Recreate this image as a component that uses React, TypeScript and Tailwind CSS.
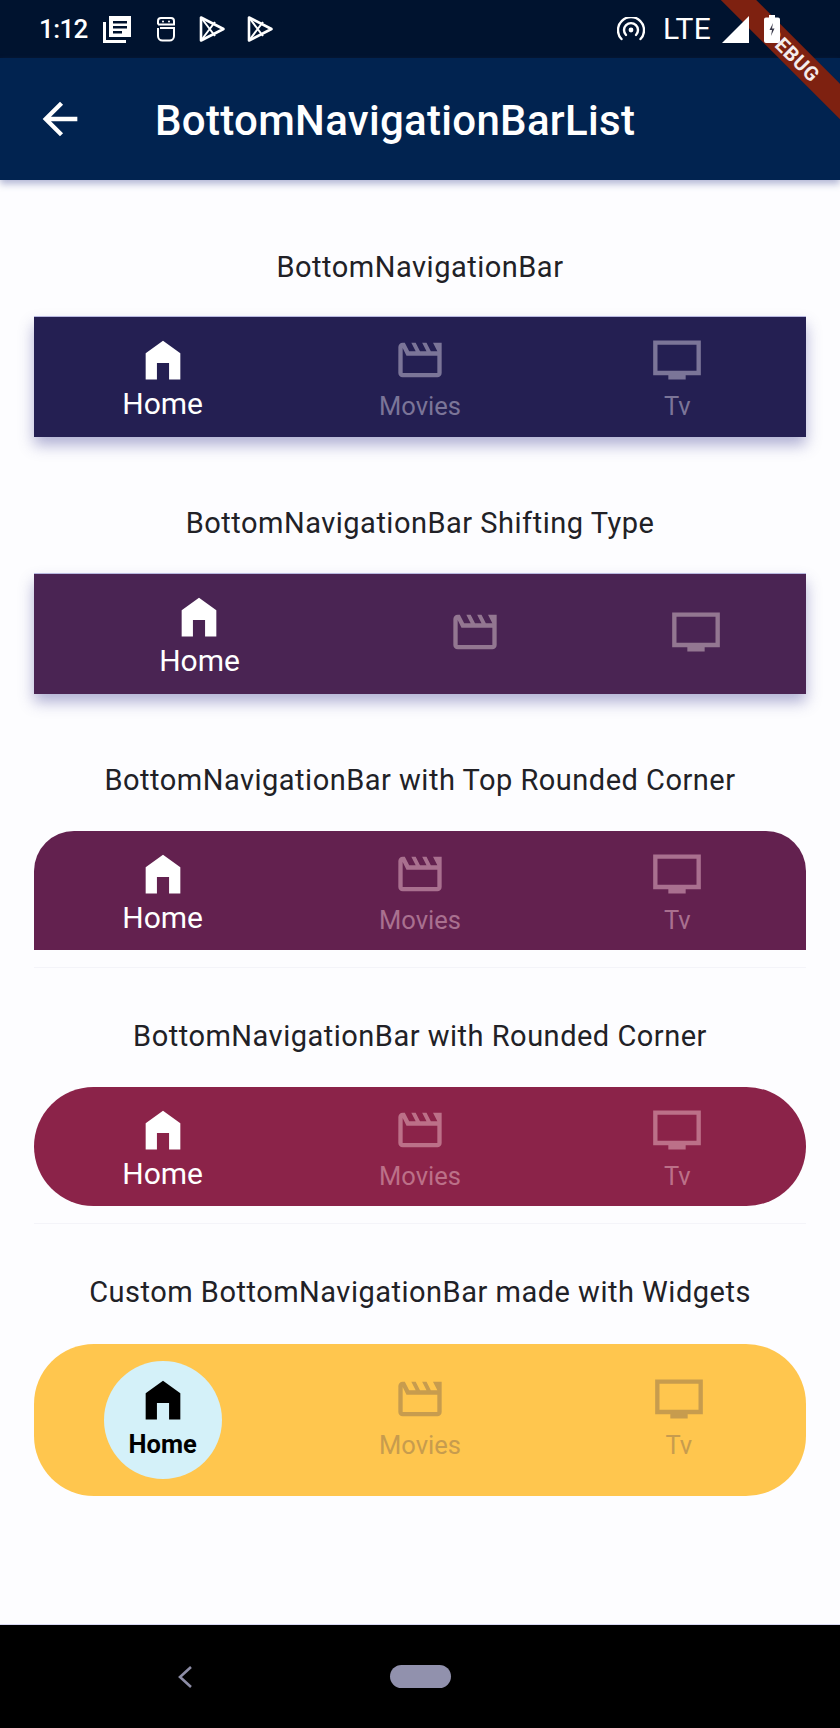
const HOME = 'M4 21V8.9L12 3.1l8 5.8V21h-5.2v-7.6H9.2V21z';
const MOVIE =
  'M4 6.47L5.76 10H20v8H4V6.47M22 4h-4l2 4h-3l-2-4h-2l2 4h-3l-2-4H8l2 4H7L5 4H4c-1.1 0-1.99.9-1.99 2L2 18c0 1.1.9 2 2 2h16c1.1 0 2-.9 2-2V4z';
const TV = 'M23 3H1v16h7v2h8v-2h7V3zm-2 14H3V5h18v12z';

function Icon({ d, className }: { d: string; className?: string }) {
  return (
    <svg viewBox="0 0 24 24" className={`h-[52px] w-[52px] shrink-0 fill-current ${className ?? ''}`}>
      <path d={d} />
    </svg>
  );
}

function Tab({ d, label, active, muted }: { d: string; label?: string; active?: boolean; muted: string }) {
  return (
    <div className={`flex flex-col items-center ${active ? 'text-white' : muted}`}>
      <Icon d={d} />
      {label && (
        <span className={active ? 'text-[30px] leading-[36px]' : 'text-[25.5px] leading-[40px]'}>{label}</span>
      )}
    </div>
  );
}

function Label({ children }: { children: string }) {
  return <p className="h-[37px] text-center text-[29px] leading-[37px] tracking-[0.5px] text-[#212126]">{children}</p>;
}

function PlayIcon() {
  return (
    <svg viewBox="0 0 28 28" className="h-7 w-7 fill-none stroke-white stroke-[2.6]" strokeLinejoin="round">
      <path d="M3 2.5v23L25.5 14z" />
      <path d="M3 2.5L17 21M3 25.5L17 7" strokeWidth="2" />
    </svg>
  );
}

function StatusBar() {
  return (
    <div className="flex h-[58px] items-center bg-[#00132f] pl-[39px] text-white">
      <span className="w-[64px] text-[26px] font-medium leading-none tracking-[-0.6px]">1:12</span>
      <svg viewBox="0 0 28 28" className="h-7 w-7 fill-white">
        <path d="M6 1h22v21H6zM0 7h3v18h20v3H0z" />
        <path d="M10 6h14v2.6H10zM10 11h14v2.6H10zM10 16h9v2.6h-9z" fill="#00132f" />
      </svg>
      <svg viewBox="0 0 22 26" className="ml-6 h-[26px] w-[22px] fill-none stroke-white stroke-2">
        <path d="M3 8.5V5a3 3 0 013-3h10a3 3 0 013 3v3.5H3M3 12v8a4.5 4.5 0 004.5 4.5h7a4.5 4.5 0 004.5-4.5v-8H5" />
        <circle cx="8" cy="5.6" r="1" fill="#fff" stroke="none" />
        <circle cx="14" cy="5.6" r="1" fill="#fff" stroke="none" />
      </svg>
      <div className="ml-[21px] flex gap-5">
        <PlayIcon />
        <PlayIcon />
      </div>
      <svg viewBox="0 0 28 24" className="ml-auto h-6 w-7 fill-none stroke-white stroke-[2.4]" strokeLinecap="round">
        <path d="M4.5 22A13 13 0 1123.5 22" />
        <path d="M9 18a7 7 0 1110 0" />
        <circle cx="14" cy="13" r="2.4" fill="#fff" stroke="none" />
      </svg>
      <span className="ml-[18px] w-[50px] text-[30px] leading-none tracking-[0.3px]">LTE</span>
      <svg viewBox="0 0 27 27" className="relative z-30 ml-[9px] h-[27px] w-[27px] fill-white">
        <path d="M27 0v27H0z" />
      </svg>
      <svg viewBox="0 0 16 28" className="relative z-30 ml-[15px] mr-[60px] h-7 w-4">
        <path d="M5 0h6v2.5h3a2 2 0 012 2V26a2 2 0 01-2 2H2a2 2 0 01-2-2V4.5a2 2 0 012-2h3z" fill="#fff" />
        <path d="M9 8l-3.5 7H8l-1 6 3.5-7.5H8z" fill="#3a3a4a" />
      </svg>
    </div>
  );
}

export default function App() {
  return (
    <div className="relative flex h-[1728px] w-[840px] flex-col overflow-hidden bg-[#fdfdff] font-[family-name:Roboto,sans-serif]">
      <StatusBar />
      <header className="relative z-10 flex h-[122px] items-center bg-[#012350] pl-[34px] text-white shadow-[0_4px_7px_rgba(70,80,150,0.4)]">
        <svg viewBox="0 0 24 24" className="h-[52px] w-[52px] fill-white">
          <path d="M20 11H7.83l5.59-5.59L12 4l-8 8 8 8 1.41-1.41L7.83 13H20v-2z" />
        </svg>
        <h1 className="ml-[69px] pt-[3px] text-[42px] font-medium tracking-[0.3px]">BottomNavigationBarList</h1>
      </header>

      <main className="flex-1 px-[34px] pt-[69px]">
        <Label>BottomNavigationBar</Label>
        <div className="mt-[31px] flex h-[120px] bg-[#241f52] pt-[17px] shadow-[0_-1px_0_#b8b8e0,0_8px_14px_rgba(70,70,150,0.42)]">
          <div className="flex flex-1 justify-center"><Tab d={HOME} label="Home" active muted="" /></div>
          <div className="flex flex-1 justify-center"><Tab d={MOVIE} label="Movies" muted="text-[#7b7598]" /></div>
          <div className="flex flex-1 justify-center"><Tab d={TV} label="Tv" muted="text-[#7b7598]" /></div>
        </div>

        <div className="mt-[68px]"><Label>BottomNavigationBar Shifting Type</Label></div>
        <div className="mt-[32px] flex h-[120px] bg-[#4a2453] shadow-[0_-1px_0_#b8b8e0,0_8px_14px_rgba(70,70,150,0.42)]">
          <div className="flex w-[331px] justify-center pt-[17px]"><Tab d={HOME} label="Home" active muted="" /></div>
          <div className="flex flex-1 items-center justify-center pb-[4px]"><Tab d={MOVIE} muted="text-[#937791]" /></div>
          <div className="flex flex-1 items-center justify-center pb-[4px]"><Tab d={TV} muted="text-[#937791]" /></div>
        </div>

        <div className="mt-[68px]"><Label>BottomNavigationBar with Top Rounded Corner</Label></div>
        <div className="mt-[32px] flex h-[119px] rounded-t-[40px] bg-[#63214f] pt-[17px]">
          <div className="flex flex-1 justify-center"><Tab d={HOME} label="Home" active muted="" /></div>
          <div className="flex flex-1 justify-center"><Tab d={MOVIE} label="Movies" muted="text-[#a9708f]" /></div>
          <div className="flex flex-1 justify-center"><Tab d={TV} label="Tv" muted="text-[#a9708f]" /></div>
        </div>
        <div className="mt-[17px] h-px bg-[#f4f4f9]" />

        <div className="mt-[50px]"><Label>BottomNavigationBar with Rounded Corner</Label></div>
        <div className="mt-[32px] flex h-[119px] rounded-[60px] bg-[#8b2349] pt-[17px]">
          <div className="flex flex-1 justify-center"><Tab d={HOME} label="Home" active muted="" /></div>
          <div className="flex flex-1 justify-center"><Tab d={MOVIE} label="Movies" muted="text-[#bc7088]" /></div>
          <div className="flex flex-1 justify-center"><Tab d={TV} label="Tv" muted="text-[#bc7088]" /></div>
        </div>
        <div className="mt-[17px] h-px bg-[#f4f4f9]" />

        <div className="mt-[50px]"><Label>Custom BottomNavigationBar made with Widgets</Label></div>
        <div className="mt-[33px] flex h-[152px] items-start rounded-[60px] bg-[#ffc64e] pt-[29px]">
          <div className="flex flex-1 justify-center">
            <div className="-mt-[12px] flex h-[118px] w-[118px] flex-col items-center rounded-full bg-[#d4f1f9] pt-[13px] text-black">
              <Icon d={HOME} />
              <span className="text-[25.5px] font-bold leading-[36px]">Home</span>
            </div>
          </div>
          <div className="flex flex-1 justify-center"><Tab d={MOVIE} label="Movies" muted="text-[#c79c4e]" /></div>
          <div className="flex flex-1 justify-center">
            <div className="ml-[3px]"><Tab d={TV} label="Tv" muted="text-[#c79c4e]" /></div>
          </div>
        </div>
      </main>

      <footer className="relative flex h-[104px] items-center justify-center border-t border-[#d8d8f2] bg-black">
        <svg viewBox="0 0 16 24" className="absolute left-[177px] top-[40px] h-6 w-4 fill-none stroke-[#8d8da6] stroke-[2.6]">
          <path d="M14 2L3 12l11 10" />
        </svg>
        <div className="h-[23px] w-[61px] rounded-full bg-[#9191ad]" />
      </footer>

      <div className="absolute right-0 top-0 z-20 h-[150px] w-[150px] overflow-hidden">
        <div className="absolute left-[-47px] top-[42px] flex h-[25px] w-[300px] rotate-45 items-center justify-center bg-[#7e2110] text-[20px] font-bold tracking-[0.5px] text-[#f4ecec]">
          DEBUG
        </div>
      </div>
    </div>
  );
}
